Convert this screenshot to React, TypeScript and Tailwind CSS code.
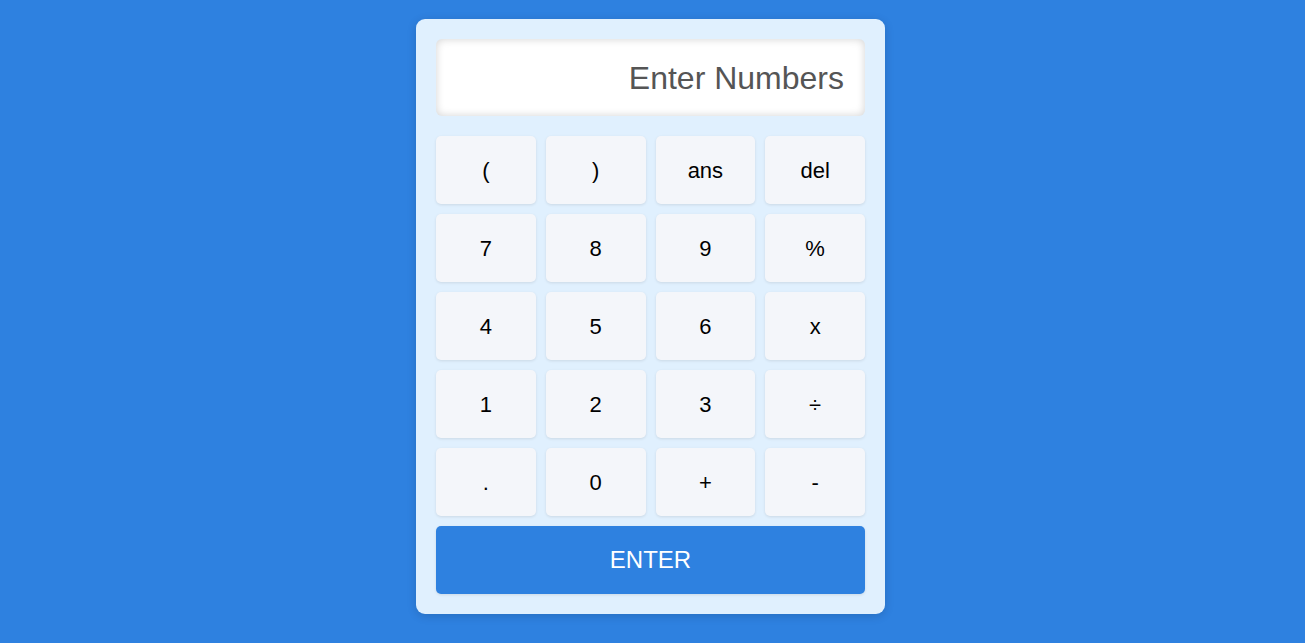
const KEYS = ['(', ')', 'ans', 'del', '7', '8', '9', '%', '4', '5', '6', 'x', '1', '2', '3', '÷', '.', '0', '+', '-']

export default function App() {
  return (
    <div className="min-h-screen bg-[#2e81e0] pr-1 pt-[19px] font-['Liberation_Sans',Arial,sans-serif]">
      <div className="mx-auto w-[469px] rounded-[9px] bg-[#e0f0fe] p-5 shadow-[0_2px_10px_rgba(0,0,0,0.15)]">
        <div className="flex h-[77px] items-center justify-end rounded-[6px] bg-white px-[21px] text-[32px] text-[#555] shadow-[inset_0_0_8px_rgba(0,0,0,0.18)]">
          Enter Numbers
        </div>
        <div className="mt-5 grid grid-cols-4 gap-[10px]">
          {KEYS.map(k => (
            <button key={k}
              className="h-[68px] rounded-[5px] bg-[#f4f6fa] text-[22px] text-black shadow-[0_1px_3px_rgba(0,0,0,0.1)]">
              {k}
            </button>
          ))}
        </div>
        <button className="mt-[10px] h-[68px] w-full rounded-[5px] bg-[#2e81e0] text-[24px] text-white shadow-[0_1px_3px_rgba(0,0,0,0.1)]">
          ENTER
        </button>
      </div>
    </div>
  )
}
